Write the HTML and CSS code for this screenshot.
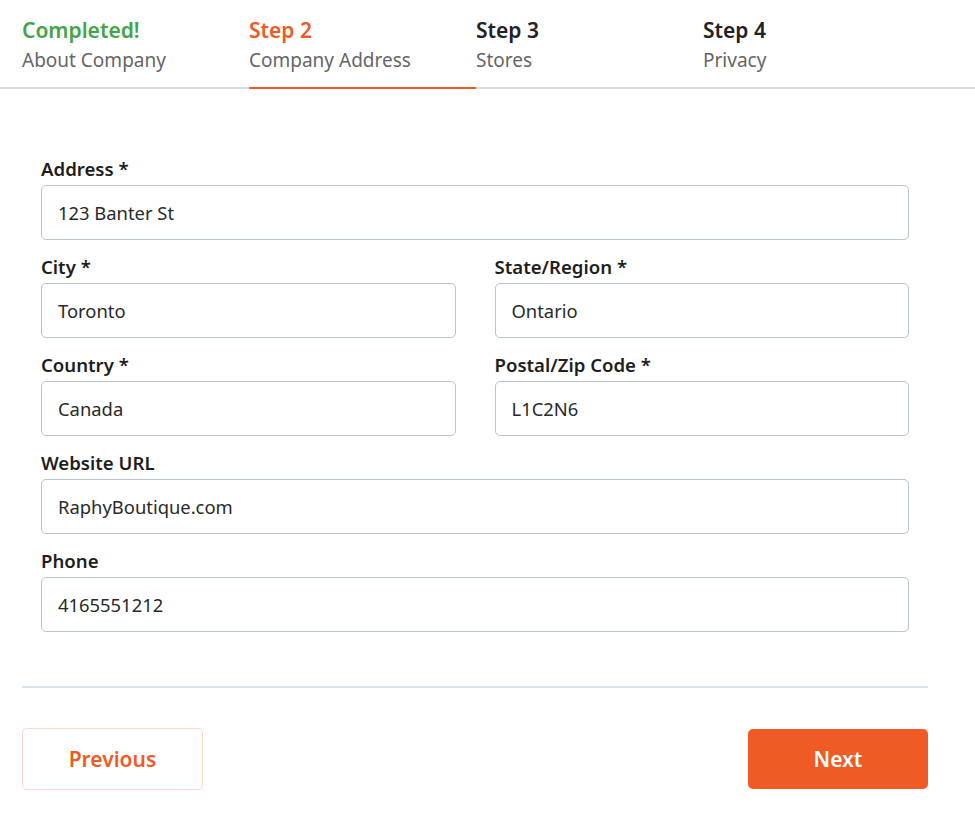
FILE: index.html
```html
<!DOCTYPE html>
<html lang="en">
<head>
<meta charset="utf-8">
<title>Company Address</title>
<link rel="stylesheet" href="styles.css">
</head>
<body>
<nav class="steps">
  <div class="step done"><div class="step-title">Completed!</div><div class="step-sub">About Company</div></div>
  <div class="step active"><div class="step-title">Step 2</div><div class="step-sub">Company Address</div></div>
  <div class="step"><div class="step-title">Step 3</div><div class="step-sub">Stores</div></div>
  <div class="step"><div class="step-title">Step 4</div><div class="step-sub">Privacy</div></div>
</nav>
<main class="wrap">
  <form class="form">
    <div class="field">
      <label class="label">Address *</label>
      <input class="input" type="text" value="123 Banter St">
    </div>
    <div class="row">
      <div class="field">
        <label class="label">City *</label>
        <input class="input" type="text" value="Toronto">
      </div>
      <div class="field">
        <label class="label">State/Region *</label>
        <input class="input" type="text" value="Ontario">
      </div>
    </div>
    <div class="row">
      <div class="field">
        <label class="label">Country *</label>
        <input class="input" type="text" value="Canada">
      </div>
      <div class="field">
        <label class="label">Postal/Zip Code *</label>
        <input class="input" type="text" value="L1C2N6">
      </div>
    </div>
    <div class="field">
      <label class="label">Website URL</label>
      <input class="input" type="text" value="RaphyBoutique.com">
    </div>
    <div class="field">
      <label class="label">Phone</label>
      <input class="input" type="text" value="4165551212">
    </div>
  </form>
  <hr class="divider">
  <div class="actions">
    <button class="btn btn-prev" type="button">Previous</button>
    <button class="btn btn-next" type="button">Next</button>
  </div>
</main>
</body>
</html>
```

FILE: styles.css
```css
* { box-sizing: border-box; }
body {
  margin: 0;
  background: #fff;
  font-family: "Noto Sans", "Open Sans", sans-serif;
  color: #222;
}
.steps {
  display: flex;
  padding: 0 0 0 22px;
  border-bottom: 2px solid #d6dde6;
  height: 89px;
}
.step {
  width: 227px;
  padding-top: 16px;
  margin-bottom: -2px;
  border-bottom: 2px solid transparent;
}
.step-title {
  font-size: 21px;
  font-weight: 600;
  line-height: 28px;
  color: #222;
}
.step-sub {
  font-size: 19px;
  line-height: 32px;
  color: #666;
}
.step.done .step-title { color: #43a548; }
.step.active .step-title { color: #f05a24; }
.step.active { border-bottom-color: #f05a24; }

.wrap {
  width: 906px;
  margin-left: 22px;
}
.form {
  padding: 68px 19px 0;
  display: flex;
  flex-direction: column;
  gap: 15px;
}
.row {
  display: grid;
  grid-template-columns: 1fr 1fr;
  column-gap: 39px;
}
.field {
  display: flex;
  flex-direction: column;
  gap: 4px;
}
.label {
  font-size: 18.6px;
  font-weight: 600;
  line-height: 24px;
  color: #1e1e1e;
}
.input {
  height: 55px;
  width: 100%;
  border: 1px solid #b9c3d1;
  border-radius: 5px;
  padding: 0 16px;
  font-family: "Noto Sans", "Open Sans", sans-serif;
  font-size: 18.4px;
  color: #2a2a2a;
  background: #fff;
}
.divider {
  margin: 54px 0 0;
  border: 0;
  border-top: 2px solid #dde3ec;
}
.actions {
  display: flex;
  justify-content: space-between;
  align-items: center;
  margin-top: 40px;
}
.btn {
  height: 62px;
  width: 181px;
  border-radius: 5px;
  font-family: "Noto Sans", "Open Sans", sans-serif;
  font-size: 21px;
  font-weight: 600;
  cursor: pointer;
}
.btn-prev {
  background: #fff;
  border: 1px solid #ffd6c9;
  color: #f05a24;
}
.btn-next {
  width: 180px;
  height: 60px;
  background: #f05a24;
  border: 0;
  color: #fff;
}
```
